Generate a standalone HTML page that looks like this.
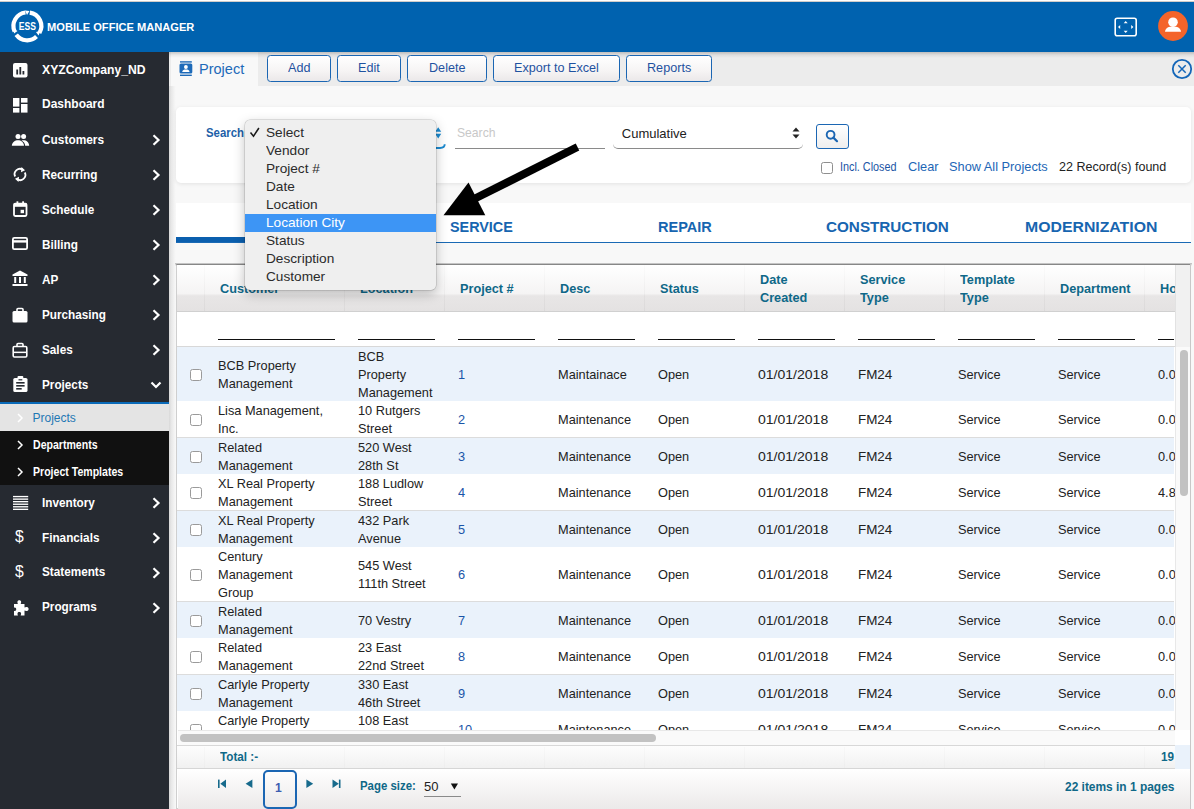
<!DOCTYPE html>
<html><head><meta charset="utf-8"><style>
*{margin:0;padding:0;box-sizing:border-box}
html,body{width:1194px;height:809px;overflow:hidden;background:#f8f8f8;font-family:"Liberation Sans",sans-serif;position:relative}
.a{position:absolute}
.t{position:absolute;white-space:nowrap;line-height:1;transform-origin:0 0}
svg{position:absolute;overflow:visible}
</style></head>
<body>
<div class="a" style="left:0px;top:0px;width:1194px;height:52px;background:#0062af"></div>
<div class="a" style="left:0px;top:0px;width:1194px;height:2px;background:linear-gradient(#fff 0,#fff 45%,#a8a29e 100%)"></div>
<svg style="left:0;top:0" width="60" height="52" viewBox="0 0 60 52">
<g fill="none" stroke="#fff" stroke-width="4.2">
<path d="M 14.6 31.5 A 13.6 13.6 0 0 1 25.5 12.5"/>
<path d="M 29.8 12.6 A 13.6 13.6 0 0 1 39.4 33"/>
<path d="M 36.5 36.5 A 13.6 13.6 0 0 1 16.2 34.8"/>
</g>
<path d="M25 10.5 L29.5 11 L27 15 Z" fill="#fff"/>
<path d="M40.5 31 L38.5 35.5 L36 32 Z" fill="#fff"/>
<path d="M14 33.5 L13.5 29 L17.5 31 Z" fill="#fff"/>
<text x="27.4" y="29.8" font-family="Liberation Sans" font-weight="bold" font-size="10.2" fill="#fff" text-anchor="middle" transform="translate(27.4 0) scale(0.84 1) translate(-27.4 0)">ESS</text>
</svg>
<div class="t" style="left:47.30px;top:21.10px;font-size:11.7px;font-weight:bold;color:#fff;transform:scaleX(0.9495);">MOBILE OFFICE MANAGER</div>
<svg style="left:1110px;top:14px" width="30" height="26" viewBox="0 0 30 26">
<rect x="5.2" y="4.2" width="21" height="17.5" rx="2" fill="none" stroke="#fff" stroke-width="1.6"/>
<path d="M15.7 7 l-2 2.2 h4z M15.7 19 l-2 -2.2 h4z M8 13 l2.2 -2 v4z M23.4 13 l-2.2 -2 v4z" fill="#fff"/>
</svg>
<svg style="left:1157px;top:10px" width="32" height="32" viewBox="0 0 32 32">
<circle cx="16" cy="16" r="14.9" fill="#f4642a"/>
<circle cx="16" cy="12.2" r="4.8" fill="#fff"/>
<path d="M8 21.8 C8.5 17.8 12 16.6 16 16.6 C20 16.6 23.5 17.8 24 21.8 Z" fill="#fff"/>
</svg>
<div class="a" style="left:0px;top:52px;width:169px;height:757px;background:#262a31"></div>
<div class="t" style="left:41.80px;top:62.67px;font-size:13.5px;font-weight:bold;color:#fff;transform:scaleX(0.9027);">XYZCompany_ND</div>
<div class="t" style="left:41.80px;top:97.37px;font-size:13.5px;font-weight:bold;color:#fff;transform:scaleX(0.8878);">Dashboard</div>
<div class="t" style="left:41.80px;top:132.77px;font-size:13.5px;font-weight:bold;color:#fff;transform:scaleX(0.8806);">Customers</div>
<svg style="left:150px;top:133.2px" width="12" height="14" viewBox="0 0 12 14"><path d="M3.5 2.3 L8.5 7 L3.5 11.7" fill="none" stroke="#fff" stroke-width="2.2"/></svg>
<div class="t" style="left:41.80px;top:167.77px;font-size:13.5px;font-weight:bold;color:#fff;transform:scaleX(0.8700);">Recurring</div>
<svg style="left:150px;top:168.2px" width="12" height="14" viewBox="0 0 12 14"><path d="M3.5 2.3 L8.5 7 L3.5 11.7" fill="none" stroke="#fff" stroke-width="2.2"/></svg>
<div class="t" style="left:41.80px;top:202.77px;font-size:13.5px;font-weight:bold;color:#fff;transform:scaleX(0.8700);">Schedule</div>
<svg style="left:150px;top:203.2px" width="12" height="14" viewBox="0 0 12 14"><path d="M3.5 2.3 L8.5 7 L3.5 11.7" fill="none" stroke="#fff" stroke-width="2.2"/></svg>
<div class="t" style="left:41.80px;top:237.77px;font-size:13.5px;font-weight:bold;color:#fff;transform:scaleX(0.8700);">Billing</div>
<svg style="left:150px;top:238.2px" width="12" height="14" viewBox="0 0 12 14"><path d="M3.5 2.3 L8.5 7 L3.5 11.7" fill="none" stroke="#fff" stroke-width="2.2"/></svg>
<div class="t" style="left:41.80px;top:272.77px;font-size:13.5px;font-weight:bold;color:#fff;transform:scaleX(0.8700);">AP</div>
<svg style="left:150px;top:273.2px" width="12" height="14" viewBox="0 0 12 14"><path d="M3.5 2.3 L8.5 7 L3.5 11.7" fill="none" stroke="#fff" stroke-width="2.2"/></svg>
<div class="t" style="left:41.80px;top:307.77px;font-size:13.5px;font-weight:bold;color:#fff;transform:scaleX(0.8700);">Purchasing</div>
<svg style="left:150px;top:308.2px" width="12" height="14" viewBox="0 0 12 14"><path d="M3.5 2.3 L8.5 7 L3.5 11.7" fill="none" stroke="#fff" stroke-width="2.2"/></svg>
<div class="t" style="left:41.80px;top:342.77px;font-size:13.5px;font-weight:bold;color:#fff;transform:scaleX(0.8700);">Sales</div>
<svg style="left:150px;top:343.2px" width="12" height="14" viewBox="0 0 12 14"><path d="M3.5 2.3 L8.5 7 L3.5 11.7" fill="none" stroke="#fff" stroke-width="2.2"/></svg>
<div class="t" style="left:41.80px;top:377.87px;font-size:13.5px;font-weight:bold;color:#fff;transform:scaleX(0.8700);">Projects</div>
<svg style="left:150px;top:378.3px" width="12" height="14" viewBox="0 0 12 14"><path d="M1.5 4.5 L6 9 L10.5 4.5" fill="none" stroke="#fff" stroke-width="2.2"/></svg>
<div class="t" style="left:41.80px;top:495.97px;font-size:13.5px;font-weight:bold;color:#fff;transform:scaleX(0.8700);">Inventory</div>
<svg style="left:150px;top:496.4px" width="12" height="14" viewBox="0 0 12 14"><path d="M3.5 2.3 L8.5 7 L3.5 11.7" fill="none" stroke="#fff" stroke-width="2.2"/></svg>
<div class="t" style="left:41.80px;top:530.67px;font-size:13.5px;font-weight:bold;color:#fff;transform:scaleX(0.8700);">Financials</div>
<svg style="left:150px;top:531.1px" width="12" height="14" viewBox="0 0 12 14"><path d="M3.5 2.3 L8.5 7 L3.5 11.7" fill="none" stroke="#fff" stroke-width="2.2"/></svg>
<div class="t" style="left:41.80px;top:565.37px;font-size:13.5px;font-weight:bold;color:#fff;transform:scaleX(0.8700);">Statements</div>
<svg style="left:150px;top:565.8px" width="12" height="14" viewBox="0 0 12 14"><path d="M3.5 2.3 L8.5 7 L3.5 11.7" fill="none" stroke="#fff" stroke-width="2.2"/></svg>
<div class="t" style="left:41.80px;top:600.17px;font-size:13.5px;font-weight:bold;color:#fff;transform:scaleX(0.8700);">Programs</div>
<svg style="left:150px;top:600.6px" width="12" height="14" viewBox="0 0 12 14"><path d="M3.5 2.3 L8.5 7 L3.5 11.7" fill="none" stroke="#fff" stroke-width="2.2"/></svg>
<div class="a" style="left:0px;top:402px;width:169px;height:2px;background:#0a6ab8"></div>
<div class="a" style="left:0px;top:404px;width:169px;height:27px;background:#e4e4e4"></div>
<div class="a" style="left:0px;top:431px;width:169px;height:54px;background:#111"></div>
<div class="t" style="left:32.50px;top:411.74px;font-size:12px;color:#1f78b4;">Projects</div>
<div class="t" style="left:32.50px;top:438.54px;font-size:12px;font-weight:bold;color:#fff;transform:scaleX(0.8800);">Departments</div>
<div class="t" style="left:32.50px;top:465.54px;font-size:12px;font-weight:bold;color:#fff;transform:scaleX(0.8800);">Project Templates</div>
<svg style="left:15px;top:411px" width="10" height="14" viewBox="0 0 10 14"><path d="M3 3 L7 7 L3 11" fill="none" stroke="#fff" stroke-width="1.5"/></svg>
<svg style="left:15px;top:438px" width="10" height="14" viewBox="0 0 10 14"><path d="M3 3 L7 7 L3 11" fill="none" stroke="#fff" stroke-width="1.5"/></svg>
<svg style="left:15px;top:465px" width="10" height="14" viewBox="0 0 10 14"><path d="M3 3 L7 7 L3 11" fill="none" stroke="#fff" stroke-width="1.5"/></svg>
<div class="t" style="left:15.00px;top:528.43px;font-size:16.5px;color:#fff;transform:scaleX(0.9500);">$</div>
<div class="t" style="left:15.00px;top:563.13px;font-size:16.5px;color:#fff;transform:scaleX(0.9500);">$</div>
<svg style="left:13px;top:63px" width="15" height="15" viewBox="0 0 15 15"><rect x="0" y="0" width="14.5" height="14.5" rx="2" fill="#fff"/><rect x="3.3" y="6.5" width="1.8" height="5" fill="#262a31"/><rect x="6.4" y="4" width="1.8" height="7.5" fill="#262a31"/><rect x="9.5" y="8" width="1.8" height="3.5" fill="#262a31"/></svg>
<svg style="left:13px;top:98px" width="15" height="15" viewBox="0 0 15 15"><rect x="0" y="0" width="6.4" height="8.6" fill="#fff"/><rect x="8" y="0" width="6.5" height="4.6" fill="#fff"/><rect x="0" y="10" width="6.4" height="4.6" fill="#fff"/><rect x="8" y="6" width="6.5" height="8.6" fill="#fff"/></svg>
<svg style="left:11px;top:133px" width="19" height="14" viewBox="0 0 19 14"><circle cx="7" cy="3.4" r="2.5" fill="#fff"/><circle cx="12.6" cy="3.4" r="2.5" fill="#fff"/><path d="M0.8 12.8 C1 9.2 4 7.2 7 7.2 C10 7.2 12.8 9.2 13 12.8Z" fill="#fff"/><path d="M10.5 7.6 C11 7.3 11.8 7.2 12.6 7.2 C15.5 7.2 18 9.2 18.2 12.8 H14.2 C14 10.5 12.5 8.6 10.5 7.6Z" fill="#fff"/></svg>
<svg style="left:13px;top:166px" width="14" height="17" viewBox="0 0 14 17"><path d="M2.2 10.5 A5.2 5.2 0 0 1 10 4" fill="none" stroke="#fff" stroke-width="1.8"/><path d="M11.8 6.5 A5.2 5.2 0 0 1 4 13" fill="none" stroke="#fff" stroke-width="1.8"/><path d="M8.5 1 L12 4.3 L8 6.2Z" fill="#fff"/><path d="M5.5 16 L2 12.7 L6 10.8Z" fill="#fff"/></svg>
<svg style="left:13px;top:201px" width="15" height="16" viewBox="0 0 15 16"><rect x="1" y="2.6" width="12.5" height="12.4" rx="1.2" fill="none" stroke="#fff" stroke-width="1.8"/><rect x="1" y="2.6" width="12.5" height="3.2" fill="#fff"/><rect x="3.5" y="0.3" width="1.8" height="3" fill="#fff"/><rect x="9.2" y="0.3" width="1.8" height="3" fill="#fff"/><rect x="7.6" y="8.8" width="3.4" height="3.4" fill="#fff"/></svg>
<svg style="left:12px;top:237px" width="16" height="13" viewBox="0 0 16 13"><rect x="0.9" y="0.9" width="14.2" height="11.2" rx="1.4" fill="none" stroke="#fff" stroke-width="1.8"/><rect x="1" y="3.2" width="14" height="2.4" fill="#fff"/></svg>
<svg style="left:12px;top:270px" width="16" height="17" viewBox="0 0 16 17"><path d="M8 0.5 L15.5 4.5 V6 H0.5 V4.5Z" fill="#fff"/><rect x="2.2" y="7" width="2" height="6" fill="#fff"/><rect x="7" y="7" width="2" height="6" fill="#fff"/><rect x="11.8" y="7" width="2" height="6" fill="#fff"/><rect x="0.5" y="14" width="15" height="2" fill="#fff"/></svg>
<svg style="left:12px;top:307.5px" width="16" height="15" viewBox="0 0 16 15"><path d="M5 3 V1.5 Q5 0.5 6 0.5 H10 Q11 0.5 11 1.5 V3" fill="none" stroke="#fff" stroke-width="1.6"/><rect x="0.5" y="3" width="15" height="11.5" rx="1.5" fill="#fff"/></svg>
<svg style="left:12px;top:342.5px" width="16" height="15" viewBox="0 0 16 15"><path d="M5 4 V1.5 Q5 0.5 6 0.5 H10 Q11 0.5 11 1.5 V4" fill="none" stroke="#fff" stroke-width="1.6"/><rect x="1.2" y="3.5" width="13.6" height="10.5" rx="1.2" fill="none" stroke="#fff" stroke-width="1.6"/><rect x="1" y="8.6" width="14" height="1.5" fill="#fff"/></svg>
<svg style="left:13px;top:376px" width="15" height="16" viewBox="0 0 15 16"><rect x="0.3" y="2" width="14.2" height="14" rx="1.6" fill="#fff"/><rect x="4.5" y="0" width="5.8" height="3.5" rx="1" fill="#fff"/><rect x="3.2" y="6" width="8.4" height="1.6" fill="#262a31"/><rect x="3.2" y="9" width="8.4" height="1.6" fill="#262a31"/><rect x="3.2" y="12" width="5.5" height="1.6" fill="#262a31"/><rect x="5.5" y="3.2" width="3.8" height="1.2" fill="#262a31"/></svg>
<svg style="left:13px;top:495px" width="16" height="16" viewBox="0 0 16 16"><rect x="0" y="0.90" width="15.2" height="1.35" fill="#fff"/><rect x="0" y="3.45" width="15.2" height="1.35" fill="#fff"/><rect x="0" y="6.00" width="15.2" height="1.35" fill="#fff"/><rect x="0" y="8.55" width="15.2" height="1.35" fill="#fff"/><rect x="0" y="11.10" width="15.2" height="1.35" fill="#fff"/><rect x="0" y="13.65" width="15.2" height="1.35" fill="#fff"/></svg>
<svg style="left:12px;top:599px" width="18" height="18" viewBox="0 0 18 18"><path d="M2 5 H6 C5 3.5 5.2 1.2 7.3 1.2 C9.4 1.2 9.6 3.5 8.6 5 H12.5 V8.5 C14 7.6 16.6 7.8 16.6 10 C16.6 12.2 14 12.4 12.5 11.5 V16.5 H8.6 C9.4 15 9.4 13 7.3 13 C5.2 13 5.2 15 6 16.5 H2 V11.7 C3.4 12.4 4.2 11.4 4.2 10.2 C4.2 9 3.4 8 2 8.7Z" fill="#fff"/></svg>
<div class="a" style="left:169px;top:52px;width:7px;height:757px;background:linear-gradient(90deg,#d8d8d8,#e8e8e8 35%,#f6f6f6 85%,#f8f8f8)"></div>
<div class="a" style="left:169px;top:52px;width:1025px;height:33.5px;background:#ececec"></div>
<div class="a" style="left:171px;top:52px;width:87px;height:33.5px;background:#f8f8f8"></div>
<div class="a" style="left:169px;top:52px;width:1025px;height:6px;background:linear-gradient(rgba(0,0,0,0.2),rgba(0,0,0,0.06) 50%,rgba(0,0,0,0))"></div>
<svg style="left:179px;top:60px" width="14" height="17" viewBox="0 0 14 17"><rect x="1" y="1.2" width="11.8" height="1.4" fill="#1d6ab9"/><rect x="1" y="14.6" width="11.8" height="1.4" fill="#1d6ab9"/><rect x="0.5" y="3.6" width="12.8" height="10" rx="1.5" fill="#1d6ab9"/><circle cx="6.9" cy="7" r="1.9" fill="#fff"/><path d="M3.2 12 C3.4 9.8 5 9.4 6.9 9.4 C8.8 9.4 10.4 9.8 10.6 12Z" fill="#fff"/></svg>
<div class="t" style="left:199.20px;top:62.13px;font-size:14.5px;color:#1d6ab9;transform:scaleX(1.0016);">Project</div>
<div class="a" style="left:267.3px;top:55.3px;width:63.4px;height:26.4px;border:1.3px solid #1b66b3;border-radius:3.5px;background:linear-gradient(#ffffff,#f6f4f4 60%,#ebe8e9)"></div>
<div class="t" style="left:287.77px;top:61.47px;font-size:13.5px;color:#1f52a0;transform:scaleX(0.9350);">Add</div>
<div class="a" style="left:337.1px;top:55.3px;width:63.8px;height:26.4px;border:1.3px solid #1b66b3;border-radius:3.5px;background:linear-gradient(#ffffff,#f6f4f4 60%,#ebe8e9)"></div>
<div class="t" style="left:358.12px;top:61.47px;font-size:13.5px;color:#1f52a0;transform:scaleX(0.9350);">Edit</div>
<div class="a" style="left:407.2px;top:55.3px;width:79.6px;height:26.4px;border:1.3px solid #1b66b3;border-radius:3.5px;background:linear-gradient(#ffffff,#f6f4f4 60%,#ebe8e9)"></div>
<div class="t" style="left:428.76px;top:61.47px;font-size:13.5px;color:#1f52a0;transform:scaleX(0.9350);">Delete</div>
<div class="a" style="left:492.9px;top:55.3px;width:126.8px;height:26.4px;border:1.3px solid #1b66b3;border-radius:3.5px;background:linear-gradient(#ffffff,#f6f4f4 60%,#ebe8e9)"></div>
<div class="t" style="left:513.86px;top:61.47px;font-size:13.5px;color:#1f52a0;transform:scaleX(0.9350);">Export to Excel</div>
<div class="a" style="left:626.2px;top:55.3px;width:85.7px;height:26.4px;border:1.3px solid #1b66b3;border-radius:3.5px;background:linear-gradient(#ffffff,#f6f4f4 60%,#ebe8e9)"></div>
<div class="t" style="left:646.95px;top:61.47px;font-size:13.5px;color:#1f52a0;transform:scaleX(0.9350);">Reports</div>
<svg style="left:1170px;top:57px" width="24" height="24" viewBox="0 0 24 24"><circle cx="12" cy="12" r="9.2" fill="none" stroke="#1466b8" stroke-width="1.8"/><path d="M8.3 8.3 L15.7 15.7 M15.7 8.3 L8.3 15.7" stroke="#1466b8" stroke-width="1.5"/></svg>
<div class="a" style="left:176px;top:106.8px;width:1014.5px;height:76px;background:#fff;border-radius:5px;box-shadow:0 1px 4px rgba(0,0,0,0.09)"></div>
<div class="t" style="left:206.00px;top:126.20px;font-size:13px;font-weight:bold;color:#1d5fa8;transform:scaleX(0.8764);">Search</div>
<svg style="left:430px;top:118px" width="20" height="34" viewBox="0 0 20 34"><path d="M8.2 9.2 L11.2 13.7 H5.2Z M5.2 15.8 H11.2 L8.2 20.6Z" fill="#1b8ad0"/><path d="M4 30 H10 Q14.7 30 14.7 26.3" fill="none" stroke="#1b8ad0" stroke-width="1.9"/></svg>
<div class="t" style="left:456.50px;top:126.30px;font-size:13px;color:#c8c8c8;transform:scaleX(0.9347);">Search</div>
<div class="a" style="left:455px;top:147.6px;width:150px;height:1.2px;background:#8a8a8a"></div>
<div class="a" style="left:613px;top:140px;width:190px;height:8.8px;border-bottom:1.2px solid #8a8a8a;border-radius:0 0 5px 5px"></div>
<div class="t" style="left:621.80px;top:127.30px;font-size:13px;color:#222;">Cumulative</div>
<svg style="left:791px;top:126px" width="10" height="14" viewBox="0 0 10 14"><path d="M1.5 5.5 L5 1.5 L8.5 5.5Z M1.5 8.5 L5 12.5 L8.5 8.5Z" fill="#222"/></svg>
<div class="a" style="left:816.2px;top:123.5px;width:32.5px;height:25px;border:1.3px solid #1b66b3;border-radius:3px;background:linear-gradient(#fff,#eeeeee)"></div>
<svg style="left:824px;top:128px" width="16" height="16" viewBox="0 0 16 16"><circle cx="6.6" cy="6.8" r="3.9" fill="none" stroke="#1b66b3" stroke-width="1.9"/><path d="M9.4 9.6 L13 13.2" stroke="#1b66b3" stroke-width="2.2" stroke-linecap="round"/></svg>
<div class="a" style="left:821px;top:162.3px;width:11.5px;height:11.3px;border:1px solid #8f8f8f;border-radius:2.5px;background:#fff"></div>
<div class="t" style="left:840.40px;top:161.44px;font-size:12px;color:#1b55a5;transform:scaleX(0.9011);">Incl. Closed</div>
<div class="t" style="left:907.70px;top:159.80px;font-size:13px;color:#1d66b6;transform:scaleX(0.9818);">Clear</div>
<div class="t" style="left:949.00px;top:159.80px;font-size:13px;color:#1d66b6;transform:scaleX(0.9828);">Show All Projects</div>
<div class="t" style="left:1058.50px;top:159.80px;font-size:13px;color:#222;transform:scaleX(0.9643);">22 Record(s) found</div>
<div class="a" style="left:176px;top:202.5px;width:1015px;height:40px;background:#fff"></div>
<div class="a" style="left:176px;top:242px;width:1015px;height:1.2px;background:#1a6ab5"></div>
<div class="a" style="left:176px;top:237.2px;width:203px;height:5px;background:#0b5fae"></div>
<div class="t" style="left:450.10px;top:219.20px;font-size:15px;font-weight:bold;color:#1765b0;transform:scaleX(0.9576);">SERVICE</div>
<div class="t" style="left:658.10px;top:219.20px;font-size:15px;font-weight:bold;color:#1765b0;transform:scaleX(0.9683);">REPAIR</div>
<div class="t" style="left:826.40px;top:219.20px;font-size:15px;font-weight:bold;color:#1765b0;transform:scaleX(1.0163);">CONSTRUCTION</div>
<div class="t" style="left:1025.00px;top:219.20px;font-size:15px;font-weight:bold;color:#1765b0;transform:scaleX(1.0546);">MODERNIZATION</div>
<div class="a" style="left:176px;top:264px;width:1015px;height:545px;background:#fff;border:1px solid #cfcfcf;border-top-color:#9a9a9a"></div>
<div class="a" style="left:175px;top:263px;width:1017px;height:3px;background:linear-gradient(rgba(0,0,0,0.25),rgba(0,0,0,0))"></div>
<div class="a" style="left:177px;top:265px;width:998px;height:47px;background:linear-gradient(#ffffff 0%,#f5f4f4 62%,#e8e6e6 67%,#e4e2e2 100%);border-bottom:1px solid #d0d0d0"></div>
<div class="a" style="left:1175px;top:265px;width:15px;height:81.5px;background:#f1f1f1;border-left:1px solid #e2e2e2"></div>
<div class="a" style="left:204px;top:265px;width:1px;height:46px;background:linear-gradient(rgba(0,0,0,0.01),rgba(0,0,0,0.04))"></div>
<div class="a" style="left:344px;top:265px;width:1px;height:46px;background:linear-gradient(rgba(0,0,0,0.01),rgba(0,0,0,0.04))"></div>
<div class="a" style="left:444px;top:265px;width:1px;height:46px;background:linear-gradient(rgba(0,0,0,0.01),rgba(0,0,0,0.04))"></div>
<div class="a" style="left:544px;top:265px;width:1px;height:46px;background:linear-gradient(rgba(0,0,0,0.01),rgba(0,0,0,0.04))"></div>
<div class="a" style="left:644px;top:265px;width:1px;height:46px;background:linear-gradient(rgba(0,0,0,0.01),rgba(0,0,0,0.04))"></div>
<div class="a" style="left:744px;top:265px;width:1px;height:46px;background:linear-gradient(rgba(0,0,0,0.01),rgba(0,0,0,0.04))"></div>
<div class="a" style="left:844px;top:265px;width:1px;height:46px;background:linear-gradient(rgba(0,0,0,0.01),rgba(0,0,0,0.04))"></div>
<div class="a" style="left:944px;top:265px;width:1px;height:46px;background:linear-gradient(rgba(0,0,0,0.01),rgba(0,0,0,0.04))"></div>
<div class="a" style="left:1044px;top:265px;width:1px;height:46px;background:linear-gradient(rgba(0,0,0,0.01),rgba(0,0,0,0.04))"></div>
<div class="a" style="left:1144px;top:265px;width:1px;height:46px;background:linear-gradient(rgba(0,0,0,0.01),rgba(0,0,0,0.04))"></div>
<div class="a" style="left:177.5px;top:265px;width:997px;height:46px;overflow:hidden">
<div class="t" style="left:42.50px;top:17.14px;font-size:13.3px;font-weight:bold;color:#0f6888;transform:scaleX(0.9550);">Customer</div>
<div class="t" style="left:182.50px;top:17.14px;font-size:13.3px;font-weight:bold;color:#0f6888;transform:scaleX(0.9550);">Location</div>
<div class="t" style="left:282.50px;top:17.14px;font-size:13.3px;font-weight:bold;color:#0f6888;transform:scaleX(0.9550);">Project #</div>
<div class="t" style="left:382.50px;top:17.14px;font-size:13.3px;font-weight:bold;color:#0f6888;transform:scaleX(0.9550);">Desc</div>
<div class="t" style="left:482.50px;top:17.14px;font-size:13.3px;font-weight:bold;color:#0f6888;transform:scaleX(0.9550);">Status</div>
<div class="t" style="left:582.50px;top:7.94px;font-size:13.3px;font-weight:bold;color:#0f6888;transform:scaleX(0.9550);">Date</div>
<div class="t" style="left:582.50px;top:25.94px;font-size:13.3px;font-weight:bold;color:#0f6888;transform:scaleX(0.9550);">Created</div>
<div class="t" style="left:682.50px;top:7.94px;font-size:13.3px;font-weight:bold;color:#0f6888;transform:scaleX(0.9550);">Service</div>
<div class="t" style="left:682.50px;top:25.94px;font-size:13.3px;font-weight:bold;color:#0f6888;transform:scaleX(0.9550);">Type</div>
<div class="t" style="left:782.50px;top:7.94px;font-size:13.3px;font-weight:bold;color:#0f6888;transform:scaleX(0.9550);">Template</div>
<div class="t" style="left:782.50px;top:25.94px;font-size:13.3px;font-weight:bold;color:#0f6888;transform:scaleX(0.9550);">Type</div>
<div class="t" style="left:882.50px;top:17.14px;font-size:13.3px;font-weight:bold;color:#0f6888;transform:scaleX(0.9550);">Department</div>
<div class="t" style="left:982.50px;top:17.14px;font-size:13.3px;font-weight:bold;color:#0f6888;transform:scaleX(0.9550);">Hours</div>
</div>
<div class="a" style="left:218px;top:338.6px;width:117px;height:1.5px;background:#111"></div>
<div class="a" style="left:358px;top:338.6px;width:77px;height:1.5px;background:#111"></div>
<div class="a" style="left:458px;top:338.6px;width:77px;height:1.5px;background:#111"></div>
<div class="a" style="left:558px;top:338.6px;width:77px;height:1.5px;background:#111"></div>
<div class="a" style="left:658px;top:338.6px;width:77px;height:1.5px;background:#111"></div>
<div class="a" style="left:758px;top:338.6px;width:77px;height:1.5px;background:#111"></div>
<div class="a" style="left:858px;top:338.6px;width:77px;height:1.5px;background:#111"></div>
<div class="a" style="left:958px;top:338.6px;width:77px;height:1.5px;background:#111"></div>
<div class="a" style="left:1058px;top:338.6px;width:77px;height:1.5px;background:#111"></div>
<div class="a" style="left:1158px;top:338.6px;width:16px;height:1.5px;background:#111"></div>
<div class="a" style="left:177px;top:345.8px;width:998px;height:1px;background:#d8d8d8"></div>
<div class="a" style="left:177px;top:347px;width:998px;height:383px;overflow:hidden">
<div class="a" style="left:0;top:0.0px;width:997px;height:54.0px;background:#eaf2fb"></div>
<div class="a" style="left:13.2px;top:22.1px;width:11.5px;height:11.5px;border:1px solid #9a9a9a;border-radius:2.5px;background:#fff"></div>
<div class="t" style="left:41.20px;top:11.57px;font-size:13.5px;color:#222;transform:scaleX(0.9450);">BCB Property</div>
<div class="t" style="left:41.20px;top:29.57px;font-size:13.5px;color:#222;transform:scaleX(0.9450);">Management</div>
<div class="t" style="left:181.20px;top:2.57px;font-size:13.5px;color:#222;transform:scaleX(0.9450);">BCB</div>
<div class="t" style="left:181.20px;top:20.57px;font-size:13.5px;color:#222;transform:scaleX(0.9450);">Property</div>
<div class="t" style="left:181.20px;top:38.57px;font-size:13.5px;color:#222;transform:scaleX(0.9450);">Management</div>
<div class="t" style="left:281.20px;top:20.57px;font-size:13.5px;color:#1a55a8;transform:scaleX(0.9450);">1</div>
<div class="t" style="left:381.00px;top:20.57px;font-size:13.5px;color:#222;transform:scaleX(0.9450);">Maintainace</div>
<div class="t" style="left:480.80px;top:20.57px;font-size:13.5px;color:#222;transform:scaleX(0.9450);">Open</div>
<div class="t" style="left:581.00px;top:20.57px;font-size:13.5px;color:#222;transform:scaleX(1.0390);">01/01/2018</div>
<div class="t" style="left:681.00px;top:20.57px;font-size:13.5px;color:#222;transform:scaleX(0.9940);">FM24</div>
<div class="t" style="left:781.00px;top:20.57px;font-size:13.5px;color:#222;transform:scaleX(0.9450);">Service</div>
<div class="t" style="left:881.00px;top:20.57px;font-size:13.5px;color:#222;transform:scaleX(0.9450);">Service</div>
<div class="t" style="left:981.00px;top:20.57px;font-size:13.5px;color:#222;transform:scaleX(0.9450);">0.0</div>
<div class="a" style="left:0;top:90.0px;width:997px;height:1px;background:#dcdcdc"></div>
<div class="a" style="left:13.2px;top:67.1px;width:11.5px;height:11.5px;border:1px solid #9a9a9a;border-radius:2.5px;background:#fff"></div>
<div class="t" style="left:41.20px;top:56.57px;font-size:13.5px;color:#222;transform:scaleX(0.9450);">Lisa Management,</div>
<div class="t" style="left:41.20px;top:74.57px;font-size:13.5px;color:#222;transform:scaleX(0.9450);">Inc.</div>
<div class="t" style="left:181.20px;top:56.57px;font-size:13.5px;color:#222;transform:scaleX(0.9450);">10 Rutgers</div>
<div class="t" style="left:181.20px;top:74.57px;font-size:13.5px;color:#222;transform:scaleX(0.9450);">Street</div>
<div class="t" style="left:281.20px;top:65.57px;font-size:13.5px;color:#1a55a8;transform:scaleX(0.9450);">2</div>
<div class="t" style="left:381.00px;top:65.57px;font-size:13.5px;color:#222;transform:scaleX(0.9450);">Maintenance</div>
<div class="t" style="left:480.80px;top:65.57px;font-size:13.5px;color:#222;transform:scaleX(0.9450);">Open</div>
<div class="t" style="left:581.00px;top:65.57px;font-size:13.5px;color:#222;transform:scaleX(1.0390);">01/01/2018</div>
<div class="t" style="left:681.00px;top:65.57px;font-size:13.5px;color:#222;transform:scaleX(0.9940);">FM24</div>
<div class="t" style="left:781.00px;top:65.57px;font-size:13.5px;color:#222;transform:scaleX(0.9450);">Service</div>
<div class="t" style="left:881.00px;top:65.57px;font-size:13.5px;color:#222;transform:scaleX(0.9450);">Service</div>
<div class="t" style="left:981.00px;top:65.57px;font-size:13.5px;color:#222;transform:scaleX(0.9450);">0.0</div>
<div class="a" style="left:0;top:91.0px;width:997px;height:36.0px;background:#eaf2fb"></div>
<div class="a" style="left:13.2px;top:104.1px;width:11.5px;height:11.5px;border:1px solid #9a9a9a;border-radius:2.5px;background:#fff"></div>
<div class="t" style="left:41.20px;top:93.57px;font-size:13.5px;color:#222;transform:scaleX(0.9450);">Related</div>
<div class="t" style="left:41.20px;top:111.57px;font-size:13.5px;color:#222;transform:scaleX(0.9450);">Management</div>
<div class="t" style="left:181.20px;top:93.57px;font-size:13.5px;color:#222;transform:scaleX(0.9450);">520 West</div>
<div class="t" style="left:181.20px;top:111.57px;font-size:13.5px;color:#222;transform:scaleX(0.9450);">28th St</div>
<div class="t" style="left:281.20px;top:102.57px;font-size:13.5px;color:#1a55a8;transform:scaleX(0.9450);">3</div>
<div class="t" style="left:381.00px;top:102.57px;font-size:13.5px;color:#222;transform:scaleX(0.9450);">Maintenance</div>
<div class="t" style="left:480.80px;top:102.57px;font-size:13.5px;color:#222;transform:scaleX(0.9450);">Open</div>
<div class="t" style="left:581.00px;top:102.57px;font-size:13.5px;color:#222;transform:scaleX(1.0390);">01/01/2018</div>
<div class="t" style="left:681.00px;top:102.57px;font-size:13.5px;color:#222;transform:scaleX(0.9940);">FM24</div>
<div class="t" style="left:781.00px;top:102.57px;font-size:13.5px;color:#222;transform:scaleX(0.9450);">Service</div>
<div class="t" style="left:881.00px;top:102.57px;font-size:13.5px;color:#222;transform:scaleX(0.9450);">Service</div>
<div class="t" style="left:981.00px;top:102.57px;font-size:13.5px;color:#222;transform:scaleX(0.9450);">0.0</div>
<div class="a" style="left:0;top:163.0px;width:997px;height:1px;background:#dcdcdc"></div>
<div class="a" style="left:13.2px;top:140.1px;width:11.5px;height:11.5px;border:1px solid #9a9a9a;border-radius:2.5px;background:#fff"></div>
<div class="t" style="left:41.20px;top:129.57px;font-size:13.5px;color:#222;transform:scaleX(0.9450);">XL Real Property</div>
<div class="t" style="left:41.20px;top:147.57px;font-size:13.5px;color:#222;transform:scaleX(0.9450);">Management</div>
<div class="t" style="left:181.20px;top:129.57px;font-size:13.5px;color:#222;transform:scaleX(0.9450);">188 Ludlow</div>
<div class="t" style="left:181.20px;top:147.57px;font-size:13.5px;color:#222;transform:scaleX(0.9450);">Street</div>
<div class="t" style="left:281.20px;top:138.57px;font-size:13.5px;color:#1a55a8;transform:scaleX(0.9450);">4</div>
<div class="t" style="left:381.00px;top:138.57px;font-size:13.5px;color:#222;transform:scaleX(0.9450);">Maintenance</div>
<div class="t" style="left:480.80px;top:138.57px;font-size:13.5px;color:#222;transform:scaleX(0.9450);">Open</div>
<div class="t" style="left:581.00px;top:138.57px;font-size:13.5px;color:#222;transform:scaleX(1.0390);">01/01/2018</div>
<div class="t" style="left:681.00px;top:138.57px;font-size:13.5px;color:#222;transform:scaleX(0.9940);">FM24</div>
<div class="t" style="left:781.00px;top:138.57px;font-size:13.5px;color:#222;transform:scaleX(0.9450);">Service</div>
<div class="t" style="left:881.00px;top:138.57px;font-size:13.5px;color:#222;transform:scaleX(0.9450);">Service</div>
<div class="t" style="left:981.00px;top:138.57px;font-size:13.5px;color:#222;transform:scaleX(0.9450);">4.8</div>
<div class="a" style="left:0;top:164.0px;width:997px;height:36.0px;background:#eaf2fb"></div>
<div class="a" style="left:13.2px;top:177.1px;width:11.5px;height:11.5px;border:1px solid #9a9a9a;border-radius:2.5px;background:#fff"></div>
<div class="t" style="left:41.20px;top:166.57px;font-size:13.5px;color:#222;transform:scaleX(0.9450);">XL Real Property</div>
<div class="t" style="left:41.20px;top:184.57px;font-size:13.5px;color:#222;transform:scaleX(0.9450);">Management</div>
<div class="t" style="left:181.20px;top:166.57px;font-size:13.5px;color:#222;transform:scaleX(0.9450);">432 Park</div>
<div class="t" style="left:181.20px;top:184.57px;font-size:13.5px;color:#222;transform:scaleX(0.9450);">Avenue</div>
<div class="t" style="left:281.20px;top:175.57px;font-size:13.5px;color:#1a55a8;transform:scaleX(0.9450);">5</div>
<div class="t" style="left:381.00px;top:175.57px;font-size:13.5px;color:#222;transform:scaleX(0.9450);">Maintenance</div>
<div class="t" style="left:480.80px;top:175.57px;font-size:13.5px;color:#222;transform:scaleX(0.9450);">Open</div>
<div class="t" style="left:581.00px;top:175.57px;font-size:13.5px;color:#222;transform:scaleX(1.0390);">01/01/2018</div>
<div class="t" style="left:681.00px;top:175.57px;font-size:13.5px;color:#222;transform:scaleX(0.9940);">FM24</div>
<div class="t" style="left:781.00px;top:175.57px;font-size:13.5px;color:#222;transform:scaleX(0.9450);">Service</div>
<div class="t" style="left:881.00px;top:175.57px;font-size:13.5px;color:#222;transform:scaleX(0.9450);">Service</div>
<div class="t" style="left:981.00px;top:175.57px;font-size:13.5px;color:#222;transform:scaleX(0.9450);">0.0</div>
<div class="a" style="left:0;top:254.0px;width:997px;height:1px;background:#dcdcdc"></div>
<div class="a" style="left:13.2px;top:222.1px;width:11.5px;height:11.5px;border:1px solid #9a9a9a;border-radius:2.5px;background:#fff"></div>
<div class="t" style="left:41.20px;top:202.57px;font-size:13.5px;color:#222;transform:scaleX(0.9450);">Century</div>
<div class="t" style="left:41.20px;top:220.57px;font-size:13.5px;color:#222;transform:scaleX(0.9450);">Management</div>
<div class="t" style="left:41.20px;top:238.57px;font-size:13.5px;color:#222;transform:scaleX(0.9450);">Group</div>
<div class="t" style="left:181.20px;top:211.57px;font-size:13.5px;color:#222;transform:scaleX(0.9450);">545 West</div>
<div class="t" style="left:181.20px;top:229.57px;font-size:13.5px;color:#222;transform:scaleX(0.9450);">111th Street</div>
<div class="t" style="left:281.20px;top:220.57px;font-size:13.5px;color:#1a55a8;transform:scaleX(0.9450);">6</div>
<div class="t" style="left:381.00px;top:220.57px;font-size:13.5px;color:#222;transform:scaleX(0.9450);">Maintenance</div>
<div class="t" style="left:480.80px;top:220.57px;font-size:13.5px;color:#222;transform:scaleX(0.9450);">Open</div>
<div class="t" style="left:581.00px;top:220.57px;font-size:13.5px;color:#222;transform:scaleX(1.0390);">01/01/2018</div>
<div class="t" style="left:681.00px;top:220.57px;font-size:13.5px;color:#222;transform:scaleX(0.9940);">FM24</div>
<div class="t" style="left:781.00px;top:220.57px;font-size:13.5px;color:#222;transform:scaleX(0.9450);">Service</div>
<div class="t" style="left:881.00px;top:220.57px;font-size:13.5px;color:#222;transform:scaleX(0.9450);">Service</div>
<div class="t" style="left:981.00px;top:220.57px;font-size:13.5px;color:#222;transform:scaleX(0.9450);">0.0</div>
<div class="a" style="left:0;top:255.0px;width:997px;height:36.0px;background:#eaf2fb"></div>
<div class="a" style="left:13.2px;top:268.1px;width:11.5px;height:11.5px;border:1px solid #9a9a9a;border-radius:2.5px;background:#fff"></div>
<div class="t" style="left:41.20px;top:257.57px;font-size:13.5px;color:#222;transform:scaleX(0.9450);">Related</div>
<div class="t" style="left:41.20px;top:275.57px;font-size:13.5px;color:#222;transform:scaleX(0.9450);">Management</div>
<div class="t" style="left:181.20px;top:266.57px;font-size:13.5px;color:#222;transform:scaleX(0.9450);">70 Vestry</div>
<div class="t" style="left:281.20px;top:266.57px;font-size:13.5px;color:#1a55a8;transform:scaleX(0.9450);">7</div>
<div class="t" style="left:381.00px;top:266.57px;font-size:13.5px;color:#222;transform:scaleX(0.9450);">Maintenance</div>
<div class="t" style="left:480.80px;top:266.57px;font-size:13.5px;color:#222;transform:scaleX(0.9450);">Open</div>
<div class="t" style="left:581.00px;top:266.57px;font-size:13.5px;color:#222;transform:scaleX(1.0390);">01/01/2018</div>
<div class="t" style="left:681.00px;top:266.57px;font-size:13.5px;color:#222;transform:scaleX(0.9940);">FM24</div>
<div class="t" style="left:781.00px;top:266.57px;font-size:13.5px;color:#222;transform:scaleX(0.9450);">Service</div>
<div class="t" style="left:881.00px;top:266.57px;font-size:13.5px;color:#222;transform:scaleX(0.9450);">Service</div>
<div class="t" style="left:981.00px;top:266.57px;font-size:13.5px;color:#222;transform:scaleX(0.9450);">0.0</div>
<div class="a" style="left:0;top:327.0px;width:997px;height:1px;background:#dcdcdc"></div>
<div class="a" style="left:13.2px;top:304.1px;width:11.5px;height:11.5px;border:1px solid #9a9a9a;border-radius:2.5px;background:#fff"></div>
<div class="t" style="left:41.20px;top:293.57px;font-size:13.5px;color:#222;transform:scaleX(0.9450);">Related</div>
<div class="t" style="left:41.20px;top:311.57px;font-size:13.5px;color:#222;transform:scaleX(0.9450);">Management</div>
<div class="t" style="left:181.20px;top:293.57px;font-size:13.5px;color:#222;transform:scaleX(0.9450);">23 East</div>
<div class="t" style="left:181.20px;top:311.57px;font-size:13.5px;color:#222;transform:scaleX(0.9450);">22nd Street</div>
<div class="t" style="left:281.20px;top:302.57px;font-size:13.5px;color:#1a55a8;transform:scaleX(0.9450);">8</div>
<div class="t" style="left:381.00px;top:302.57px;font-size:13.5px;color:#222;transform:scaleX(0.9450);">Maintenance</div>
<div class="t" style="left:480.80px;top:302.57px;font-size:13.5px;color:#222;transform:scaleX(0.9450);">Open</div>
<div class="t" style="left:581.00px;top:302.57px;font-size:13.5px;color:#222;transform:scaleX(1.0390);">01/01/2018</div>
<div class="t" style="left:681.00px;top:302.57px;font-size:13.5px;color:#222;transform:scaleX(0.9940);">FM24</div>
<div class="t" style="left:781.00px;top:302.57px;font-size:13.5px;color:#222;transform:scaleX(0.9450);">Service</div>
<div class="t" style="left:881.00px;top:302.57px;font-size:13.5px;color:#222;transform:scaleX(0.9450);">Service</div>
<div class="t" style="left:981.00px;top:302.57px;font-size:13.5px;color:#222;transform:scaleX(0.9450);">0.0</div>
<div class="a" style="left:0;top:328.0px;width:997px;height:36.0px;background:#eaf2fb"></div>
<div class="a" style="left:13.2px;top:341.1px;width:11.5px;height:11.5px;border:1px solid #9a9a9a;border-radius:2.5px;background:#fff"></div>
<div class="t" style="left:41.20px;top:330.57px;font-size:13.5px;color:#222;transform:scaleX(0.9450);">Carlyle Property</div>
<div class="t" style="left:41.20px;top:348.57px;font-size:13.5px;color:#222;transform:scaleX(0.9450);">Management</div>
<div class="t" style="left:181.20px;top:330.57px;font-size:13.5px;color:#222;transform:scaleX(0.9450);">330 East</div>
<div class="t" style="left:181.20px;top:348.57px;font-size:13.5px;color:#222;transform:scaleX(0.9450);">46th Street</div>
<div class="t" style="left:281.20px;top:339.57px;font-size:13.5px;color:#1a55a8;transform:scaleX(0.9450);">9</div>
<div class="t" style="left:381.00px;top:339.57px;font-size:13.5px;color:#222;transform:scaleX(0.9450);">Maintenance</div>
<div class="t" style="left:480.80px;top:339.57px;font-size:13.5px;color:#222;transform:scaleX(0.9450);">Open</div>
<div class="t" style="left:581.00px;top:339.57px;font-size:13.5px;color:#222;transform:scaleX(1.0390);">01/01/2018</div>
<div class="t" style="left:681.00px;top:339.57px;font-size:13.5px;color:#222;transform:scaleX(0.9940);">FM24</div>
<div class="t" style="left:781.00px;top:339.57px;font-size:13.5px;color:#222;transform:scaleX(0.9450);">Service</div>
<div class="t" style="left:881.00px;top:339.57px;font-size:13.5px;color:#222;transform:scaleX(0.9450);">Service</div>
<div class="t" style="left:981.00px;top:339.57px;font-size:13.5px;color:#222;transform:scaleX(0.9450);">0.0</div>
<div class="a" style="left:0;top:400.0px;width:997px;height:1px;background:#dcdcdc"></div>
<div class="a" style="left:13.2px;top:377.1px;width:11.5px;height:11.5px;border:1px solid #9a9a9a;border-radius:2.5px;background:#fff"></div>
<div class="t" style="left:41.20px;top:366.57px;font-size:13.5px;color:#222;transform:scaleX(0.9450);">Carlyle Property</div>
<div class="t" style="left:41.20px;top:384.57px;font-size:13.5px;color:#222;transform:scaleX(0.9450);">Management</div>
<div class="t" style="left:181.20px;top:366.57px;font-size:13.5px;color:#222;transform:scaleX(0.9450);">108 East</div>
<div class="t" style="left:181.20px;top:384.57px;font-size:13.5px;color:#222;transform:scaleX(0.9450);">Street</div>
<div class="t" style="left:281.20px;top:375.57px;font-size:13.5px;color:#1a55a8;transform:scaleX(0.9450);">10</div>
<div class="t" style="left:381.00px;top:375.57px;font-size:13.5px;color:#222;transform:scaleX(0.9450);">Maintenance</div>
<div class="t" style="left:480.80px;top:375.57px;font-size:13.5px;color:#222;transform:scaleX(0.9450);">Open</div>
<div class="t" style="left:581.00px;top:375.57px;font-size:13.5px;color:#222;transform:scaleX(1.0390);">01/01/2018</div>
<div class="t" style="left:681.00px;top:375.57px;font-size:13.5px;color:#222;transform:scaleX(0.9940);">FM24</div>
<div class="t" style="left:781.00px;top:375.57px;font-size:13.5px;color:#222;transform:scaleX(0.9450);">Service</div>
<div class="t" style="left:881.00px;top:375.57px;font-size:13.5px;color:#222;transform:scaleX(0.9450);">Service</div>
<div class="t" style="left:981.00px;top:375.57px;font-size:13.5px;color:#222;transform:scaleX(0.9450);">0.0</div>
</div>
<div class="a" style="left:1175px;top:346.5px;width:15.5px;height:383.5px;background:#fafafa;border-left:1px solid #e8e8e8"></div>
<div class="a" style="left:1180.4px;top:350px;width:8px;height:146px;background:#c2c2c2;border-radius:4px"></div>
<div class="a" style="left:177.5px;top:730px;width:997.5px;height:15.5px;background:#fafafa;border-top:1px solid #e8e8e8"></div>
<div class="a" style="left:180px;top:733.7px;width:476px;height:8.3px;background:#c2c2c2;border-radius:4.2px"></div>
<div class="a" style="left:1175px;top:730px;width:15.5px;height:15.5px;background:#fff"></div>
<div class="a" style="left:177px;top:744.6px;width:998px;height:24px;background:linear-gradient(#fdfdfd,#f1f1f1);border-top:1px solid #d8d8d8;border-bottom:1px solid #d6d6d6"></div>
<div class="a" style="left:1175px;top:744.6px;width:15.5px;height:24px;background:#eaf2fb"></div>
<div class="a" style="left:204px;top:746.5px;width:1px;height:21px;background:rgba(0,0,0,0.015)"></div>
<div class="a" style="left:344px;top:746.5px;width:1px;height:21px;background:rgba(0,0,0,0.015)"></div>
<div class="a" style="left:444px;top:746.5px;width:1px;height:21px;background:rgba(0,0,0,0.015)"></div>
<div class="a" style="left:544px;top:746.5px;width:1px;height:21px;background:rgba(0,0,0,0.015)"></div>
<div class="a" style="left:644px;top:746.5px;width:1px;height:21px;background:rgba(0,0,0,0.015)"></div>
<div class="a" style="left:744px;top:746.5px;width:1px;height:21px;background:rgba(0,0,0,0.015)"></div>
<div class="a" style="left:844px;top:746.5px;width:1px;height:21px;background:rgba(0,0,0,0.015)"></div>
<div class="a" style="left:944px;top:746.5px;width:1px;height:21px;background:rgba(0,0,0,0.015)"></div>
<div class="a" style="left:1044px;top:746.5px;width:1px;height:21px;background:rgba(0,0,0,0.015)"></div>
<div class="a" style="left:1144px;top:746.5px;width:1px;height:21px;background:rgba(0,0,0,0.015)"></div>
<div class="t" style="left:220.20px;top:749.70px;font-size:13px;font-weight:bold;color:#0f6888;transform:scaleX(0.9000);">Total :-</div>
<div class="t" style="left:1160.70px;top:749.70px;font-size:13px;font-weight:bold;color:#0f6888;transform:scaleX(0.9000);">19</div>
<div class="a" style="left:177.5px;top:768.5px;width:1012px;height:40.5px;background:linear-gradient(#ffffff,#f3f2f2 60%,#ebe9e9)"></div>
<svg style="left:214px;top:776px" width="130" height="16" viewBox="0 0 130 16"><g fill="#176a8c"><rect x="4" y="3.6" width="1.6" height="8.4"/><path d="M12 3.6 V12 L6.3 7.8Z"/><path d="M38.4 3.6 V12 L31.6 7.8Z"/><path d="M92.4 3.6 V12 L99.2 7.8Z"/><path d="M118.5 3.6 V12 L124.8 7.8Z"/><rect x="124.9" y="3.6" width="1.6" height="8.4"/></g></svg>
<div class="a" style="left:262.6px;top:769.6px;width:34px;height:39px;border:2px solid #1b66b3;border-radius:5px;background:transparent"></div>
<div class="t" style="left:275.20px;top:780.57px;font-size:13.5px;font-weight:bold;color:#3d5db0;transform:scaleX(0.9000);">1</div>
<div class="t" style="left:360.40px;top:778.90px;font-size:13px;font-weight:bold;color:#0f6888;transform:scaleX(0.8776);">Page size:</div>
<div class="t" style="left:424.10px;top:780.30px;font-size:13px;color:#222;">50</div>
<div class="a" style="left:424px;top:796px;width:36.6px;height:1.2px;background:#8a8a8a"></div>
<svg style="left:449px;top:782px" width="10" height="9" viewBox="0 0 10 9"><path d="M1.8 1.6 H9 L5.4 7.6Z" fill="#111"/></svg>
<div class="t" style="left:1065.20px;top:780.30px;font-size:13px;font-weight:bold;color:#0f6888;transform:scaleX(0.9176);">22 items in 1 pages</div>
<div class="a" style="left:1190px;top:264px;width:1px;height:545px;background:#c8c8c8"></div>
<div class="a" style="left:245px;top:120px;width:191px;height:170px;background:#efefef;border-radius:5px;box-shadow:0 0 0 0.5px rgba(0,0,0,0.2),0 4px 12px rgba(0,0,0,0.25)"></div>
<div class="a" style="left:245px;top:214px;width:191px;height:18px;background:#3d95f5"></div>
<div class="t" style="left:266.40px;top:126.20px;font-size:13px;color:#2b2b2b;transform:scaleX(1.0500);">Select</div>
<div class="t" style="left:266.40px;top:144.20px;font-size:13px;color:#2b2b2b;transform:scaleX(1.0500);">Vendor</div>
<div class="t" style="left:266.40px;top:162.20px;font-size:13px;color:#2b2b2b;transform:scaleX(1.0500);">Project #</div>
<div class="t" style="left:266.40px;top:180.20px;font-size:13px;color:#2b2b2b;transform:scaleX(1.0500);">Date</div>
<div class="t" style="left:266.40px;top:198.20px;font-size:13px;color:#2b2b2b;transform:scaleX(1.0500);">Location</div>
<div class="t" style="left:266.40px;top:216.20px;font-size:13px;color:#fff;transform:scaleX(1.0500);">Location City</div>
<div class="t" style="left:266.40px;top:234.20px;font-size:13px;color:#2b2b2b;transform:scaleX(1.0500);">Status</div>
<div class="t" style="left:266.40px;top:252.20px;font-size:13px;color:#2b2b2b;transform:scaleX(1.0500);">Description</div>
<div class="t" style="left:266.40px;top:270.20px;font-size:13px;color:#2b2b2b;transform:scaleX(1.0500);">Customer</div>
<svg style="left:249px;top:126px" width="13" height="13" viewBox="0 0 13 13"><path d="M1.5 6.6 L4.5 10.2 L9.9 2" fill="none" stroke="#1a1a1a" stroke-width="1.55"/></svg>
<svg style="left:0;top:0" width="1194" height="809" viewBox="0 0 1194 809"><path d="M577.5 147 L474 199" stroke="#000" stroke-width="8"/><path d="M443.5 215.2 L468.5 182.4 L485.3 215.2Z" fill="#000"/></svg>
</body></html>
